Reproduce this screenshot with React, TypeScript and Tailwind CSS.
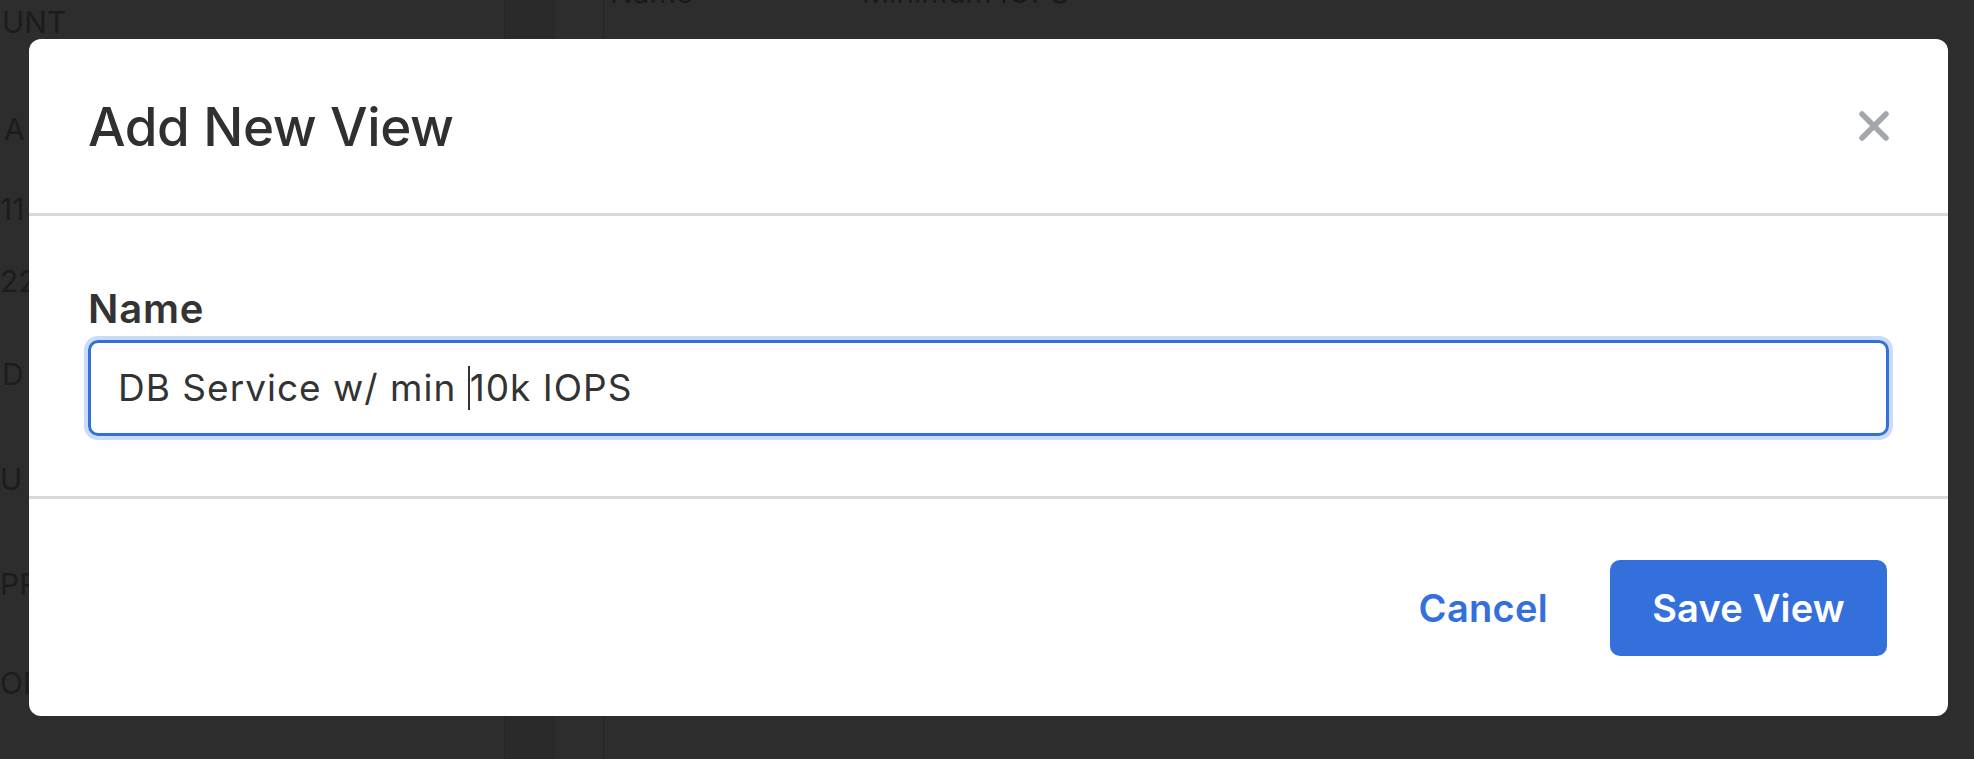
export default function App() {
  return (
    <div className="relative h-[759px] w-[1974px] overflow-hidden bg-[#2d2d2d] font-['Inter','Noto_Sans',sans-serif]">
      {/* backdrop page */}
      <div className="flex h-full">
        <div className="flex w-[504px] flex-col text-[30px] leading-[36px] text-[#1c1c1c]">
          <div className="mt-[4px] pl-[2px]">UNT</div>
          <div className="mt-[71px] pl-[4px]">A</div>
          <div className="mt-[44px] pl-[0px]">11</div>
          <div className="mt-[36px] pl-[0px]">22</div>
          <div className="mt-[57px] pl-[2px]">D</div>
          <div className="mt-[69px] pl-[0px]">U</div>
          <div className="mt-[69px] pl-[0px]">PR</div>
          <div className="mt-[63px] pl-[0px]">ON</div>
        </div>
        <div className="w-[49px] border-l border-[#252525] bg-[#2a2a2a]" />
        <div className="w-[50px] border-l border-[#252525]" />
        <div className="flex flex-1 border-l border-[#252525] text-[30px] leading-[36px] text-[#1a1a1a]">
          <div className="-mt-[26px] ml-[6px] w-[252px]">Name</div>
          <div className="-mt-[26px]">Minimum IOPS</div>
        </div>
      </div>

      {/* modal */}
      <div className="absolute left-[29px] top-[39px] flex h-[677px] w-[1919px] flex-col rounded-[12px] bg-white">
        <div className="flex h-[177px] items-center justify-between border-b-[3px] border-[#d9d9d9] pl-[59px] pr-[58px]">
          <div className="mt-[2px] text-[53px] font-medium leading-[66px] tracking-[-0.4px] text-[#303030]">Add New View</div>
          <svg width="32" height="30" viewBox="0 0 32 30" fill="none">
            <path d="M4 3 L28 27 M28 3 L4 27" stroke="#a3a6aa" strokeWidth="5.5" strokeLinecap="round" />
          </svg>
        </div>
        <div className="flex h-[283px] flex-col border-b-[3px] border-[#d9d9d9] px-[59px] pt-[70px]">
          <div className="text-[40px] font-semibold leading-[46px] tracking-[0.8px] text-[#333333]">Name</div>
          <div className="mt-[8px] flex h-[96px] items-center rounded-[10px] border-[3px] border-[#3370dc] pl-[27px] text-[37px] leading-[44px] tracking-[1px] text-[#333333] shadow-[0_0_0_4px_#cbdcf7]">
            <span className="whitespace-pre">DB Service w/ min </span>
            <span className="inline-block h-[44px] w-[2px] bg-[#333333]" />
            <span className="whitespace-pre">10k IOPS</span>
          </div>
        </div>
        <div className="flex flex-1 items-center justify-end gap-[62px] pr-[61px]">
          <div className="text-[38px] font-semibold leading-[46px] tracking-[0.3px] text-[#3370dc]">Cancel</div>
          <div className="flex h-[96px] w-[277px] items-center justify-center rounded-[10px] bg-[#3370dc] text-[38px] font-semibold leading-[46px] tracking-[0.2px] text-white">
            Save View
          </div>
        </div>
      </div>
    </div>
  );
}
